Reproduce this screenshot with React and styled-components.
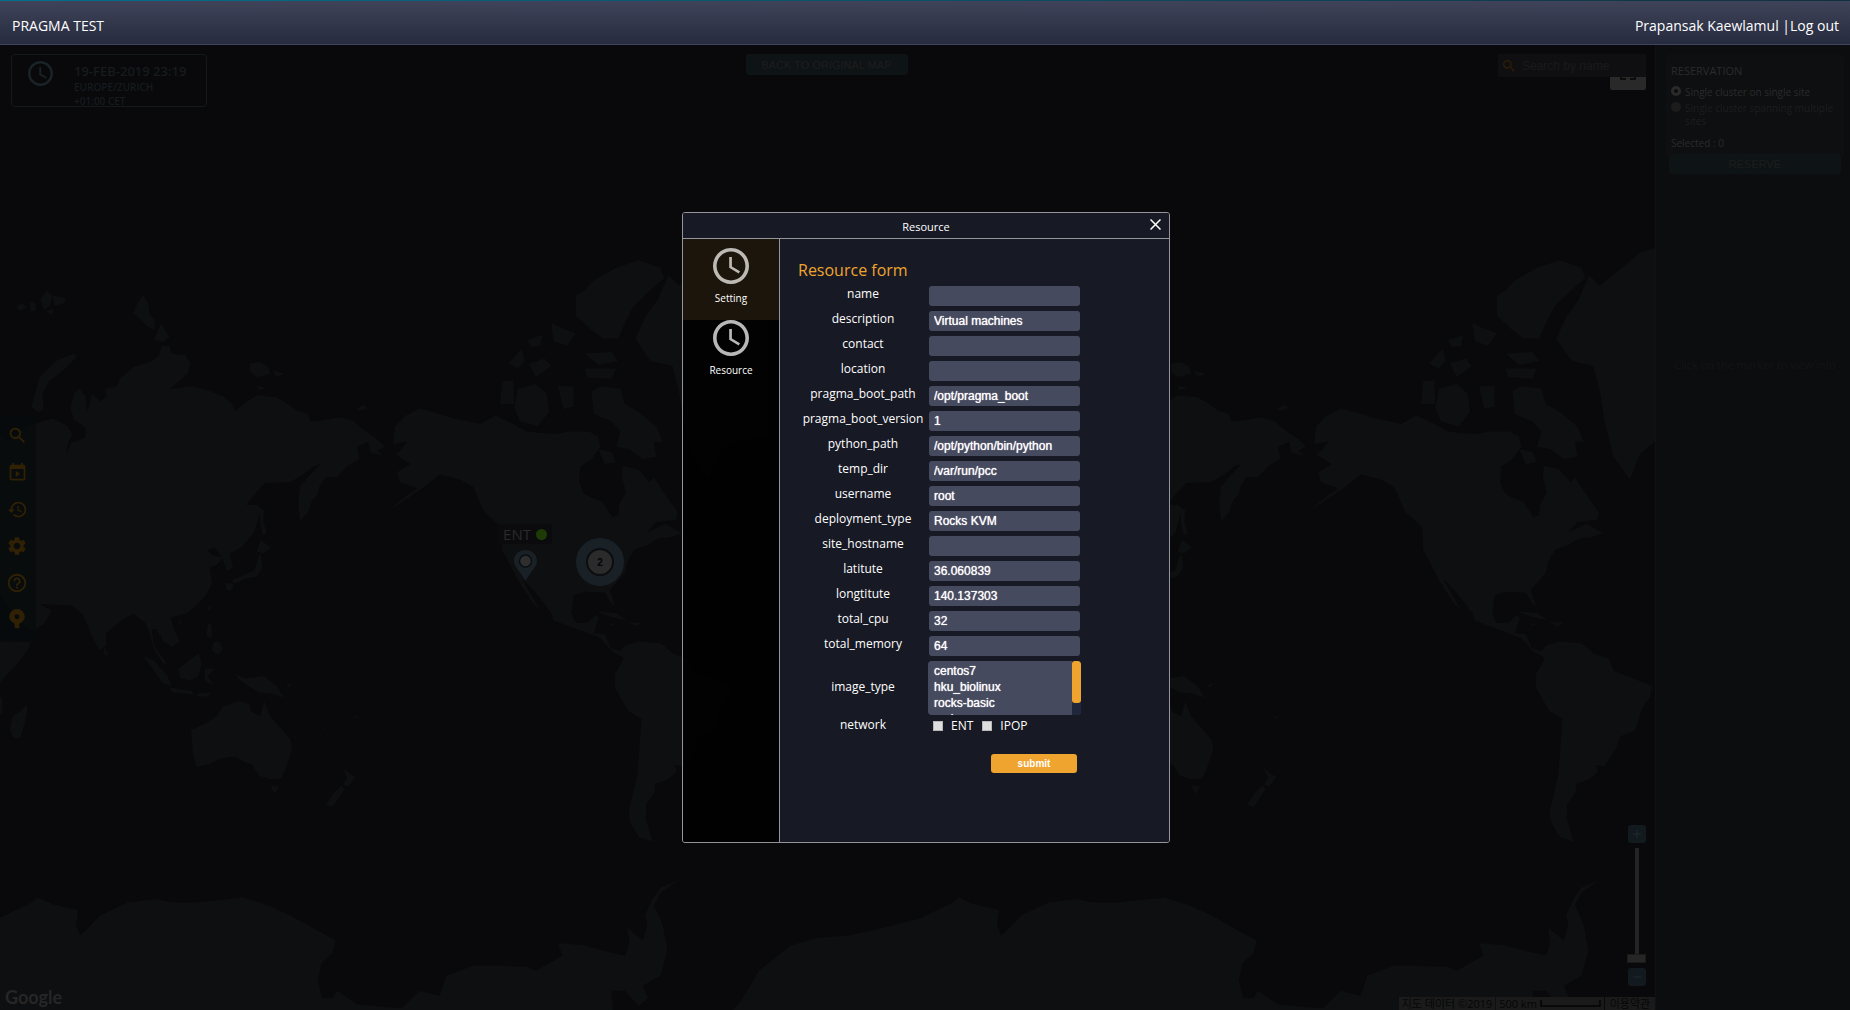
import React from "react";
import styled, { createGlobalStyle, css } from "styled-components";
import { MdSearch, MdHistory, MdSettings, MdHelpOutline } from "react-icons/md";

const UI_FONT = '"Open Sans", "Noto Sans CJK KR", sans-serif';
const CONTROL_FONT = '"Liberation Sans", Arial, sans-serif';

const GlobalStyle = createGlobalStyle`
  *, *::before, *::after { box-sizing: border-box; }
  body { margin: 0; background: #09090b; font-family: ${UI_FONT}; }
  button, input, select { font-family: ${CONTROL_FONT}; margin: 0; }
`;

/* ---------- page frame ---------- */

const Page = styled.div`
  min-height: 100vh;
  display: flex;
  flex-direction: column;
`;

const TopBar = styled.header`
  height: 45px;
  display: flex;
  align-items: center;
  justify-content: space-between;
  padding: 8px 11px 0 12px;
  color: #fff;
  font-size: 14px;
  line-height: 20px;
  border-bottom: 1px solid #40445c;
  background:
    linear-gradient(90deg, #03708c, #12303f) top / 100% 1px no-repeat,
    linear-gradient(#40445a, #272b3f);
`;

const Brand = styled.h1`
  margin: 0;
  font-size: 14px;
  font-weight: 400;
`;

const Account = styled.nav`
  display: flex;
`;

const AccountLink = styled.a`
  color: inherit;
  text-decoration: none;
`;

const Workspace = styled.div`
  position: relative;
  flex: 1;
  display: flex;
  overflow: hidden;
`;

/* ---------- map ---------- */

const MapArea = styled.main`
  position: relative;
  flex: 1;
  overflow: hidden;
  background: #09090b;
`;

const MapCanvas = styled.svg`
  position: absolute;
  inset: 0;
  width: 100%;
  height: 100%;
  fill: #0e0f10;
`;

const ClockCard = styled.section`
  position: absolute;
  left: 11px;
  top: 9px;
  width: 196px;
  height: 53px;
  padding: 6px 0 0 16px;
  display: flex;
  gap: 21px;
  overflow: hidden;
  border: 1px solid #13191c;
  border-radius: 4px;
  color: #151b1f;
`;

const ClockLines = styled.div`
  display: flex;
  flex-direction: column;
  padding-top: 2px;
  font-size: 10px;
  font-weight: 600;
  line-height: 14px;
`;

const ClockTime = styled.time`
  font-size: 13px;
  line-height: 17px;
`;

const DimButton = styled.button`
  height: ${(p) => p.$height}px;
  padding: 0;
  border: 0;
  border-radius: 3px;
  background: #0e1315;
  color: #1a1b1c;
  font-size: 11px;
  text-shadow: 0 0 1px #1a1b1c;
`;

const BackSlot = styled.div`
  position: absolute;
  top: 9px;
  left: 0;
  right: 2px;
  display: flex;
  justify-content: center;

  ${DimButton} { width: 162px; }
`;

const SearchCluster = styled.div`
  position: absolute;
  top: 9px;
  right: 9px;
`;

const SearchBox = styled.label`
  position: relative;
  z-index: 1;
  display: flex;
  align-items: center;
  gap: 5px;
  width: 148px;
  height: 23px;
  padding-left: 3px;
  background: #0f0f11;
  color: #2e1e06;
`;

const SearchInput = styled.input`
  flex: 1;
  min-width: 0;
  padding: 0;
  border: 0;
  background: none;
  color: #1a1a1b;
  font-size: 12px;
  &::placeholder { color: #1a1a1b; opacity: 1; }
`;

const FullscreenButton = styled.button`
  position: absolute;
  right: 0;
  top: 0;
  width: 36px;
  height: 36px;
  padding: 10px;
  border: 0;
  border-radius: 2px;
  background: #292929;
  color: #0c0c0c;
  svg { display: block; }
`;

const ToolRail = styled.nav`
  position: absolute;
  left: 0;
  top: 370px;
  width: 36px;
  height: 227px;
  padding: 9px 6px;
  display: flex;
  flex-direction: column;
  gap: 15px;
  background: rgba(8, 11, 13, 0.8);
`;

const RailButton = styled.button`
  display: grid;
  place-items: center;
  width: 22px;
  height: 22px;
  padding: 0;
  border: 0;
  background: none;
  color: #302105;
`;

const SiteMarker = styled.div`
  position: absolute;
  left: 498px;
  top: 479px;
  width: 54px;
  display: flex;
  flex-direction: column;
  align-items: center;
  gap: 5px;
`;

const SiteTag = styled.div`
  display: flex;
  align-items: center;
  justify-content: center;
  gap: 5px;
  width: 100%;
  height: 20px;
  background: #0b0b0d;
  color: #2a2a2b;
  font-size: 15px;
  line-height: 20px;
`;

const StatusDot = styled.span`
  width: 11px;
  height: 11px;
  border-radius: 50%;
  background: #1e3b07;
`;

const Cluster = styled.button`
  position: absolute;
  left: 576px;
  top: 493px;
  width: 48px;
  height: 48px;
  padding: 0;
  display: grid;
  place-items: center;
  border: 0;
  border-radius: 50%;
  background: #192126;
`;

const ClusterCount = styled.span`
  display: grid;
  place-items: center;
  width: 28px;
  height: 28px;
  border: 2px solid #0b0e10;
  border-radius: 50%;
  background: #2b2b2b;
  color: #020208;
  font-size: 10px;
  font-weight: 700;
`;

const ZoomControl = styled.div`
  position: absolute;
  right: 9px;
  bottom: 24px;
  width: 19px;
  display: flex;
  flex-direction: column;
  align-items: center;
  gap: 5px;
`;

const ZoomButton = styled.button`
  width: 18px;
  height: 18px;
  padding: 0;
  display: grid;
  place-items: center;
  border: 0;
  border-radius: 3px;
  background: #131a1f;
  color: #22292c;
`;

const ZoomSlider = styled.input`
  appearance: none;
  writing-mode: vertical-lr;
  direction: rtl;
  width: 19px;
  height: 115px;
  background: linear-gradient(#242424, #242424) center / 4px 100% no-repeat;
  &::-webkit-slider-thumb {
    appearance: none;
    width: 19px;
    height: 9px;
    background: #262626;
    border: 1px solid #1c1a16;
  }
`;

const GoogleMark = styled.a`
  position: absolute;
  left: 5px;
  bottom: 1px;
  color: #262627;
  font-family: Lato, sans-serif;
  font-size: 18px;
  font-weight: 700;
  line-height: 24px;
  text-decoration: none;
`;

const Attribution = styled.footer`
  position: absolute;
  right: 0;
  bottom: 0;
  display: flex;
  gap: 1px;
  color: #060606;
  font-size: 11px;
  line-height: 13px;
`;

const AttributionCell = styled.div`
  display: flex;
  align-items: center;
  justify-content: center;
  gap: 3px;
  width: ${(p) => p.$width}px;
  height: 13px;
  background: #1a1a1a;
  white-space: nowrap;
  a { color: inherit; text-decoration: none; }
`;

const ScaleBar = styled.span`
  width: 61px;
  height: 7px;
  border: 2px solid #080808;
  border-top: 0;
`;

/* ---------- reservation column ---------- */

const SideColumn = styled.aside`
  width: 195px;
  padding: 9px 6px 0 10px;
  border-left: 1px solid #0f1113;
  background: #0b0d0f;
  color: #2a2b2c;
  font-size: 10px;
  line-height: 13px;
`;

const ReservationCard = styled.form`
  padding: 8px 3px 0;
  height: 104px;
  display: flex;
  flex-direction: column;
  border-radius: 4px;
  background: #0e0f11;
`;

const CardTitle = styled.h2`
  margin: 0 0 6px 2px;
  font-size: 11px;
  font-weight: 400;
  line-height: 18px;
`;

const RadioRow = styled.label`
  display: flex;
  align-items: flex-start;
  gap: 4px;
  margin: 0 0 3px 2px;
  color: ${(p) => (p.$muted ? "#1d1e1f" : "#2a2b2c")};
`;

const Radio = styled.input`
  appearance: none;
  flex: none;
  width: 10px;
  height: 10px;
  border-radius: 50%;
  background: #1c1c1d;
  &:checked { border: 3px solid #2a2a2a; background: #0c0c0c; }
`;

const Selected = styled.p`
  margin: 6px 0 4px 2px;
`;

const ReserveSlot = styled.div`
  ${DimButton} { width: 100%; flex: none; }
`;

const Hint = styled.p`
  margin: 200px 0 0;
  color: #121518;
  font-size: 11px;
  text-align: center;
`;

/* ---------- dialog ---------- */

const DialogLayer = styled.div`
  position: absolute;
  inset: 0;
  display: flex;
  align-items: center;
  justify-content: center;
  padding-left: 2px;
`;

const Dialog = styled.section`
  width: 488px;
  min-height: 631px;
  display: flex;
  flex-direction: column;
  border: 1px solid #94959a;
  border-radius: 3px;
  overflow: hidden;
  color: #fff;
`;

const DialogHeader = styled.header`
  position: relative;
  height: 26px;
  padding-top: 5px;
  border-bottom: 1px solid #94959a;
  background: #171924;
  font-size: 11px;
  line-height: 18px;
  text-align: center;
`;

const DialogTitle = styled.h2`
  margin: 0;
  font: inherit;
`;

const CloseButton = styled.button`
  position: absolute;
  right: 8px;
  top: 6px;
  width: 11px;
  height: 11px;
  padding: 0;
  border: 0;
  background: none;
  color: #fff;
  svg { display: block; }
`;

const DialogBody = styled.div`
  flex: 1;
  display: flex;
`;

const TabList = styled.nav`
  width: 97px;
  border-right: 1px solid #94959a;
  background: rgba(0, 0, 0, 0.85);
`;

const Tab = styled.button`
  display: flex;
  flex-direction: column;
  align-items: center;
  gap: 7px;
  width: 100%;
  padding: 0 0 15px;
  border: 0;
  background: none;
  color: #fff;
  font-family: ${UI_FONT};
  font-size: 10px;
  line-height: 14px;
  ${(p) => p.$active && css`
    padding-top: 9px;
    background: #1c150b;
  `}
`;

const FormPanel = styled.form`
  flex: 1;
  padding: 20px 18px 0;
  background: #171924;
`;

const FormTitle = styled.h3`
  margin: 0 0 4px;
  color: #f0a430;
  font-size: 16px;
  font-weight: 400;
  line-height: 23px;
`;

const FieldLabel = styled.label`
  text-align: center;
`;

const Row = styled.div`
  display: grid;
  grid-template-columns: 130px 153px;
  align-items: start;
  margin-bottom: 5px;
  font-size: 12px;
  line-height: 16px;
  ${(p) => p.$tall && css`
    align-items: center;
    margin-bottom: 2px;
    ${FieldLabel} { padding-bottom: 3px; }
  `}
`;

const TextInput = styled.input`
  width: 151px;
  height: 20px;
  margin-left: 1px;
  padding: 0 5px;
  border: 0;
  border-radius: 3px;
  background: #464a5e;
  color: #fff;
  font-size: 12px;
  text-shadow: 0 0 1px #fff;
`;

const SelectFrame = styled.div`
  position: relative;
  height: 54px;
  border-radius: 3px;
  overflow: hidden;
`;

const ImageSelect = styled.select`
  width: 100%;
  height: 54px;
  padding: 3px 4px;
  border: 0;
  border-radius: 3px;
  background: #464a5e;
  color: #fff;
  font-size: 12px;
  text-shadow: 0 0 1px #fff;
  scrollbar-width: none;
  option { padding: 0 2px; min-height: 0; height: 16px; line-height: 16px; }
`;

const ScrollTrack = styled.span`
  position: absolute;
  top: 0;
  right: 0;
  width: 9px;
  height: 100%;
  background: #20263b;
  &::before {
    content: "";
    display: block;
    height: 42px;
    border-radius: 3px;
    background: #f0a430;
  }
`;

const CheckGroup = styled.div`
  display: flex;
  gap: 9px;
  padding-left: 5px;
`;

const CheckLabel = styled.label`
  display: flex;
  align-items: center;
  gap: 8px;
  padding-top: 1px;
`;

const CheckBox = styled.input`
  appearance: none;
  width: 10px;
  height: 10px;
  border: 1px solid #b8b8b8;
  background: #dedede;
`;

const Actions = styled.div`
  display: flex;
  width: 279px;
  justify-content: flex-end;
  margin-top: 20px;
`;

const SubmitButton = styled.button`
  width: 86px;
  height: 19px;
  padding: 0;
  border: 0;
  border-radius: 3px;
  background: #f0a430;
  color: #fff;
  font-size: 10px;
  font-weight: 700;
`;

/* ---------- drawings ---------- */

const LAND = [
  // Eurasia
  "M0,430L20,440 40,425 60,408 85,402 118,394 150,408 162,425 152,445 148,465 160,442 176,437 190,432 192,412 166,397 158,375 165,345 178,335 192,350 196,380 206,345 225,360 240,350 235,335 262,330 268,315 300,292 340,280 356,270 362,250 380,250 384,265 415,268 427,285 420,305 395,325 380,336 430,330 465,338 500,350 520,365 527,380 545,365 575,348 620,352 640,362 665,378 690,385 695,400 720,398 760,392 790,398 820,420 850,438 862,450 845,458 858,468 830,462 825,440 800,450 805,475 780,487 755,510 730,510 715,530 712,545 700,555 690,580 672,598 668,560 672,530 690,510 712,490 718,485 700,490 680,505 650,520 595,522 575,540 552,565 575,565 585,572 570,620 540,650 515,662 522,690 508,698 498,670 480,650 465,655 475,665 500,670 485,685 470,690 475,720 462,745 445,760 420,780 400,785 382,790 390,812 402,835 385,848 366,836 350,812 340,812 345,845 372,878 366,882 345,852 335,820 325,800 300,782 280,790 238,820 237,845 222,853 205,825 192,795 185,782 160,765 90,762 116,775 100,800 75,815 60,810 30,780 0,745Z",
  // Africa and Madagascar
  "M0,832L68,838 65,850 40,880 0,918ZM0,945L6,955 5,978 0,980ZM58,962L62,970 55,1000 45,1028 30,1028 22,1012 28,985 45,975Z",
  // Russian Arctic islands
  "M165,265L172,272 140,300 110,320 95,345 98,375 85,382 70,370 80,340 90,310 125,280ZM320,148L332,165 335,185 347,200 347,218 330,212 312,195 298,185 308,165ZM360,205L380,232 365,242 345,238ZM560,285L580,282 600,290 605,305 575,312 560,300ZM610,298L638,306 620,311ZM575,328L598,334 580,338ZM797,375L815,366 822,374 805,378ZM37,170L50,165 60,172 48,180 40,178ZM66,165L78,162 82,178 70,182ZM90,158L105,140 118,150 112,170 98,178ZM118,150L148,155 142,166 122,170ZM102,180L122,176 116,188Z",
  // Japan and Sakhalin
  "M582,572L592,575 590,600 598,622 588,625 582,600ZM584,635L608,650 590,662 575,658ZM584,662L588,690 575,708 550,712 525,722 520,715 545,705 570,695 578,670ZM503,720L525,722 518,735 508,735Z",
  // South-east Asia
  "M468,765L474,770 466,779ZM398,797L408,796 404,803ZM466,800L474,805 475,830 462,825ZM478,838L490,835 500,852 488,864 475,855ZM232,848L243,860 235,865ZM320,865L345,875 375,905 385,925 365,920 345,895ZM380,928L430,935 435,942 385,938ZM440,940L475,938 465,947 442,945ZM400,890L430,870 445,860 452,880 445,905 425,915 403,908ZM458,890L482,890 465,905 478,922 460,916ZM525,900L550,910 590,905 620,925 636,948 605,940 580,938 555,925 540,915ZM640,925L655,918 648,928Z",
  // Oceania
  "M428,1012L460,1000 485,985 500,965 535,955 558,960 562,975 583,985 592,955 605,985 630,1010 650,1030 655,1050 640,1090 630,1108 605,1110 580,1103 565,1082 545,1075 525,1065 490,1070 470,1080 440,1086 432,1060ZM605,1122L625,1125 615,1140ZM768,1087L785,1100 797,1105 780,1125 768,1120 778,1108ZM765,1122L772,1130 745,1165 730,1160 745,1140ZM716,1002L730,1010 728,1012ZM790,988L803,982 796,990Z",
  // Americas
  "M885,410L905,390 940,374 975,382 1010,392 1050,400 1075,405 1110,388 1150,405 1180,420 1240,425 1275,420 1320,420 1340,430 1345,450 1325,475 1300,490 1297,520 1310,545 1350,560 1372,590 1385,585 1387,565 1402,540 1393,510 1395,488 1430,495 1455,520 1465,510 1490,545 1518,580 1515,595 1470,600 1450,620 1490,603 1528,622 1500,630 1475,632 1450,645 1420,655 1405,680 1400,700 1366,735 1378,765 1370,762 1355,740 1310,738 1285,745 1280,780 1290,800 1315,800 1335,783 1342,790 1330,820 1355,822 1368,850 1390,855 1400,845 1430,836 1480,840 1510,862 1540,870 1552,895 1582,905 1638,925 1634,945 1615,970 1600,1013 1566,1025 1556,1050 1531,1085 1511,1082 1516,1095 1497,1110 1467,1120 1467,1135 1447,1160 1447,1190 1462,1234 1432,1225 1413,1200 1408,1175 1428,1100 1437,990 1408,975 1378,930 1378,900 1398,870 1370,855 1345,830 1300,815 1240,795 1235,780 1200,740 1170,712 1190,745 1212,776 1195,762 1165,722 1125,655 1123,610 1085,580 1060,530 1030,515 985,505 950,530 900,560 870,577 910,548 935,533 895,520 890,500 920,485 885,465 895,460 912,440 880,445Z",
  "M1335,777L1380,780 1405,795 1370,788ZM1405,797L1440,800 1425,806ZM1364,800L1378,803 1370,805Z",
  // Canadian Arctic
  "M1325,340L1345,330 1390,335 1400,365 1430,380 1470,410 1485,440 1465,440 1470,470 1440,475 1410,455 1380,450 1390,420 1370,400 1330,385ZM1125,320L1150,318 1152,365 1120,365ZM1160,335L1200,325 1225,345 1230,380 1205,410 1165,400 1152,372ZM1330,120L1380,95 1430,80 1480,95 1488,115 1450,145 1420,170 1400,205 1385,235 1350,235 1320,215 1290,190 1290,150 1310,140ZM1138,285L1170,255 1175,280 1160,295ZM1185,285L1220,275 1235,290 1200,312ZM1235,205L1260,215 1290,225 1270,250 1240,240ZM1180,238L1215,228 1210,250 1190,252ZM1310,265L1370,262 1385,280 1340,288ZM1310,295L1380,295 1370,315 1315,312ZM1250,330L1285,330 1285,370 1262,375ZM1340,455L1370,460 1380,480 1355,485Z",
  // Greenland
  "M1720,40L1644,55 1610,65 1570,95 1521,130 1497,110 1472,160 1447,190 1423,235 1457,280 1506,290 1521,340 1531,400 1551,470 1588,515 1610,465 1644,440 1720,430Z",
  // Antarctica
  "M0,1385L70,1355 85,1345 115,1357 175,1370 170,1400 180,1420 225,1380 285,1355 350,1348 380,1354 430,1355 545,1345 600,1360 650,1380 700,1405 752,1430 745,1455 720,1475 712,1510 722,1545 745,1545 755,1530 800,1557 900,1565 940,1530 985,1540 1000,1500 1060,1480 1180,1482 1200,1490 1260,1460 1250,1435 1310,1440 1350,1450 1400,1460 1410,1435 1405,1405 1440,1430 1450,1400 1445,1380 1460,1350 1480,1325 1520,1310 1480,1335 1465,1360 1485,1400 1495,1450 1480,1500 1440,1520 1452,1545 1430,1560 1400,1530 1370,1530 1375,1600 0,1600Z",
  "M1610,1600L1660,1550 1700,1490 1770,1440 1830,1425 1900,1420 1980,1405 2064,1385 2064,1600Z",
].join("");

const WORLD_WIDTH = 921;

const WorldMap = () => (
  <MapCanvas aria-hidden="true">
    <defs>
      <path id="land" d={LAND} transform="translate(0 175) scale(0.4464 0.5038)" />
    </defs>
    {[0, 1, 2].map((n) => (
      <use key={n} href="#land" x={n * WORLD_WIDTH} />
    ))}
  </MapCanvas>
);

const Clock = ({ size, color }) => (
  <svg width={size} height={size} viewBox="2 2 20 20" fill={color} aria-hidden="true">
    <path d="M11.99 2C6.47 2 2 6.48 2 12s4.47 10 9.99 10C17.52 22 22 17.52 22 12S17.52 2 11.99 2zM12 20c-4.42 0-8-3.58-8-8s3.58-8 8-8 8 3.58 8 8-3.58 8-8 8z" />
    <path d="M12.5 7H11v6l5.25 3.15.75-1.23-4.5-2.67z" />
  </svg>
);

const CalendarPlay = () => (
  <svg width="21" height="21" viewBox="0 0 24 24" fill="currentColor" aria-hidden="true">
    <path d="M19 19V8H5v11h14M16 1h2v2h1a2 2 0 0 1 2 2v14a2 2 0 0 1-2 2H5a2 2 0 0 1-2-2V5c0-1.11.89-2 2-2h1V1h2v2h8V1m-6 9l5 3.5-5 3.5v-7z" />
  </svg>
);

const MapPin = () => (
  <svg width="20" height="22" viewBox="1 3 22 24" fill="currentColor" aria-hidden="true">
    <path fillRule="evenodd" d="M12 3a8.500 8.500 0 0 0-8.500 8.500c0 3.600 2.600 5.800 6 7.700V24h5v-4.800c3.400-1.900 6-4.100 6-7.700A8.500 8.500 0 0 0 12 3zm0 5.800a2.700 2.700 0 1 1 0 5.400 2.700 2.700 0 0 1 0-5.400z" />
  </svg>
);

const SitePin = () => (
  <svg width="23" height="32" viewBox="0 0 23 32" aria-hidden="true">
    <path d="M11.500 1C5 1 0 5.500 0 12c0 6 6 10 11.500 20C17 22 23 18 23 12 23 5.500 18 1 11.500 1z" fill="#192126" />
    <circle cx="11.500" cy="12" r="6" fill="#2e2e2e" stroke="#0b0e10" strokeWidth="1.500" />
  </svg>
);

/* ---------- data ---------- */

const TOOLS = [
  { name: "Search", icon: <MdSearch size={21} /> },
  { name: "Calendar", icon: <CalendarPlay /> },
  { name: "History", icon: <MdHistory size={21} /> },
  { name: "Settings", icon: <MdSettings size={22} /> },
  { name: "Help", icon: <MdHelpOutline size={22} /> },
  { name: "Sites", icon: <MapPin /> },
];

const FIELDS = [
  ["name", ""],
  ["description", "Virtual machines"],
  ["contact", ""],
  ["location", ""],
  ["pragma_boot_path", "/opt/pragma_boot"],
  ["pragma_boot_version", "1"],
  ["python_path", "/opt/python/bin/python"],
  ["temp_dir", "/var/run/pcc"],
  ["username", "root"],
  ["deployment_type", "Rocks KVM"],
  ["site_hostname", ""],
  ["latitute", "36.060839"],
  ["longtitute", "140.137303"],
  ["total_cpu", "32"],
  ["total_memory", "64"],
];

const IMAGES = ["centos7", "hku_biolinux", "rocks-basic", "rocks-sge"];

const ResourceDialog = () => (
  <Dialog role="dialog" aria-labelledby="dialog-title">
    <DialogHeader>
      <DialogTitle id="dialog-title">Resource</DialogTitle>
      <CloseButton type="button" aria-label="Close">
        <svg width="11" height="11" viewBox="0 0 11 11" stroke="currentColor" strokeWidth="1.500">
          <path d="M.5.5l10 10M10.500.5l-10 10" />
        </svg>
      </CloseButton>
    </DialogHeader>
    <DialogBody>
      <TabList>
        <Tab type="button" $active>
          <Clock size={36} color="#bdbab5" />
          Setting
        </Tab>
        <Tab type="button">
          <Clock size={36} color="#b8b8b8" />
          Resource
        </Tab>
      </TabList>
      <FormPanel onSubmit={(e) => e.preventDefault()}>
        <FormTitle>Resource form</FormTitle>
        {FIELDS.map(([name, value]) => (
          <Row key={name}>
            <FieldLabel htmlFor={name}>{name}</FieldLabel>
            <TextInput id={name} type="text" defaultValue={value} />
          </Row>
        ))}
        <Row $tall>
          <FieldLabel htmlFor="image_type">image_type</FieldLabel>
          <SelectFrame>
            <ImageSelect id="image_type" multiple>
              {IMAGES.map((image) => (
                <option key={image}>{image}</option>
              ))}
            </ImageSelect>
            <ScrollTrack aria-hidden="true" />
          </SelectFrame>
        </Row>
        <Row>
          <FieldLabel as="span" id="network">network</FieldLabel>
          <CheckGroup role="group" aria-labelledby="network">
            {["ENT", "IPOP"].map((net) => (
              <CheckLabel key={net}>
                <CheckBox type="checkbox" />
                {net}
              </CheckLabel>
            ))}
          </CheckGroup>
        </Row>
        <Actions>
          <SubmitButton type="submit">submit</SubmitButton>
        </Actions>
      </FormPanel>
    </DialogBody>
  </Dialog>
);

export default function App() {
  return (
    <Page>
      <GlobalStyle />
      <TopBar>
        <Brand>PRAGMA TEST</Brand>
        <Account>
          <span>Prapansak Kaewlamul |</span>
          <AccountLink href="#logout">Log out</AccountLink>
        </Account>
      </TopBar>

      <Workspace>
        <MapArea>
          <WorldMap />

          <SiteMarker>
            <SiteTag>
              ENT <StatusDot />
            </SiteTag>
            <SitePin />
          </SiteMarker>
          <Cluster type="button">
            <ClusterCount>2</ClusterCount>
          </Cluster>

          <ClockCard>
            <Clock size={25} color="#1a2328" />
            <ClockLines>
              <ClockTime>19-FEB-2019 23:19</ClockTime>
              <span>EUROPE/ZURICH</span>
              <span>+01:00 CET</span>
            </ClockLines>
          </ClockCard>

          <BackSlot>
            <DimButton type="button" $height={21}>BACK TO ORIGINAL MAP</DimButton>
          </BackSlot>

          <SearchCluster>
            <SearchBox>
              <MdSearch size={16} />
              <SearchInput type="text" placeholder="Search by name" aria-label="Search by name" />
            </SearchBox>
            <FullscreenButton type="button" aria-label="Full screen">
              <svg width="16" height="16" viewBox="0 0 16 16" fill="none" stroke="currentColor" strokeWidth="2">
                <path d="M1 6V1h5M10 1h5v5M15 10v5h-5M6 15H1v-5" />
              </svg>
            </FullscreenButton>
          </SearchCluster>

          <ToolRail>
            {TOOLS.map((tool) => (
              <RailButton key={tool.name} type="button" aria-label={tool.name}>
                {tool.icon}
              </RailButton>
            ))}
          </ToolRail>

          <ZoomControl>
            <ZoomButton type="button" aria-label="Zoom in">
              <svg width="8" height="8" viewBox="0 0 8 8" stroke="currentColor"><path d="M4 0v8M0 4h8" /></svg>
            </ZoomButton>
            <ZoomSlider type="range" min="0" max="10" defaultValue="0" aria-label="Zoom" />
            <ZoomButton type="button" aria-label="Zoom out">
              <svg width="8" height="8" viewBox="0 0 8 8" stroke="currentColor"><path d="M0 4h8" /></svg>
            </ZoomButton>
          </ZoomControl>

          <GoogleMark href="#google">Google</GoogleMark>
          <Attribution>
            <AttributionCell $width={96}>지도 데이터 ©2019</AttributionCell>
            <AttributionCell $width={108}>
              500 km <ScaleBar />
            </AttributionCell>
            <AttributionCell $width={50}>
              <a href="#terms">이용약관</a>
            </AttributionCell>
          </Attribution>
        </MapArea>

        <SideColumn>
          <ReservationCard onSubmit={(e) => e.preventDefault()}>
            <CardTitle>RESERVATION</CardTitle>
            <RadioRow>
              <Radio type="radio" name="cluster" defaultChecked />
              Single cluster on single site
            </RadioRow>
            <RadioRow $muted>
              <Radio type="radio" name="cluster" />
              Single cluster spanning multiple sites
            </RadioRow>
            <Selected>Selected : 0</Selected>
            <ReserveSlot>
              <DimButton type="submit" $height={20}>RESERVE</DimButton>
            </ReserveSlot>
          </ReservationCard>
          <Hint>Click on the marker to view info</Hint>
        </SideColumn>

        <DialogLayer>
          <ResourceDialog />
        </DialogLayer>
      </Workspace>
    </Page>
  );
}
